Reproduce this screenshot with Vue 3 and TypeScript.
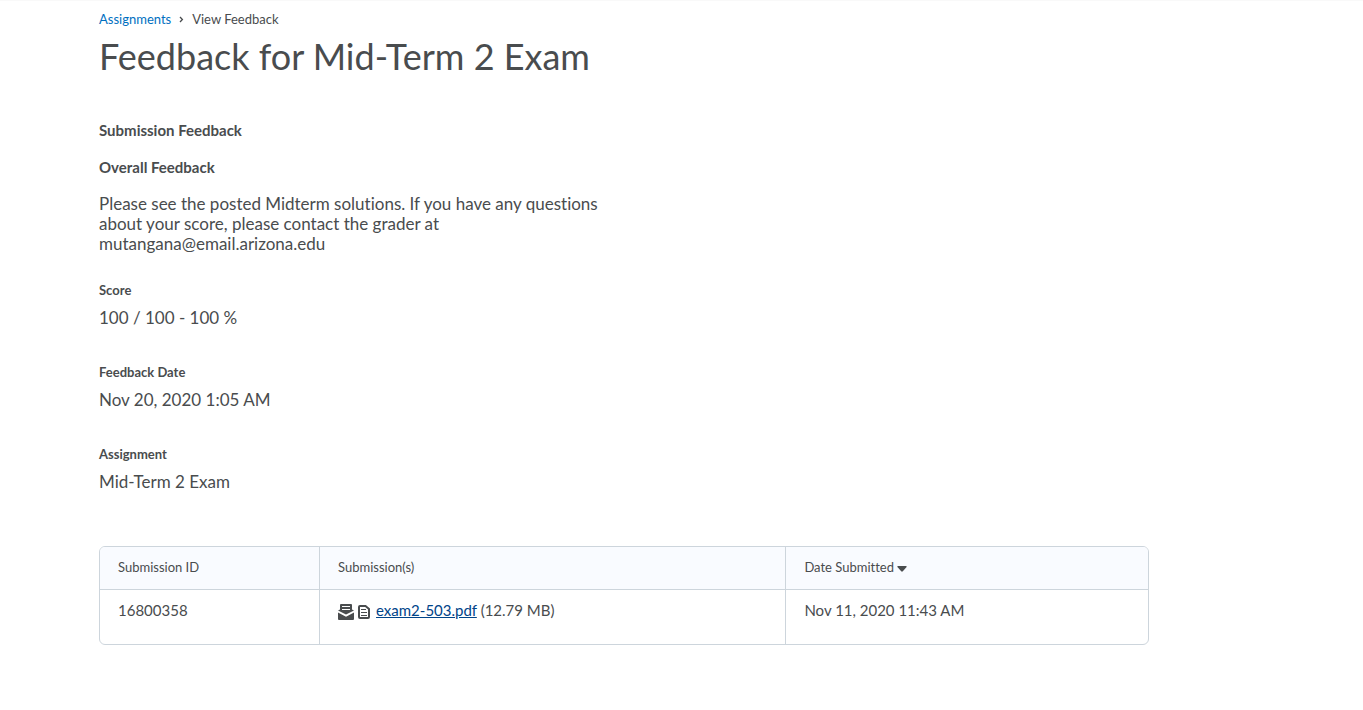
<script setup lang="ts">
interface Detail {
  label: string
  value: string
}

interface Submission {
  id: string
  file: string
  size: string
  date: string
}

const details: Detail[] = [
  { label: 'Score', value: '100 / 100 - 100 %' },
  { label: 'Feedback Date', value: 'Nov 20, 2020 1:05 AM' },
  { label: 'Assignment', value: 'Mid-Term 2 Exam' },
]

const submissions: Submission[] = [
  { id: '16800358', file: 'exam2-503.pdf', size: '(12.79 MB)', date: 'Nov 11, 2020 11:43 AM' },
]
</script>

<template>
  <main class="page">
    <nav class="crumbs" aria-label="Breadcrumb">
      <a href="#">Assignments</a>
      <svg class="chevron" viewBox="0 0 5 8" aria-hidden="true"><path d="M1 2 3.4 4.5 1 7" /></svg>
      <span>View Feedback</span>
    </nav>
    <h1>Feedback for Mid-Term 2 Exam</h1>

    <h2>Submission Feedback</h2>
    <h2>Overall Feedback</h2>
    <p class="feedback">
      Please see the posted Midterm solutions. If you have any questions about your score, please contact the grader at
      mutangana@email.arizona.edu
    </p>

    <dl>
      <div v-for="item in details" :key="item.label" class="detail">
        <dt>{{ item.label }}</dt>
        <dd>{{ item.value }}</dd>
      </div>
    </dl>

    <table>
      <thead>
        <tr>
          <th class="col-id" scope="col">Submission ID</th>
          <th class="col-file" scope="col">Submission(s)</th>
          <th scope="col" aria-sort="descending">
            <button type="button" class="sort">
              Date Submitted
              <svg class="caret" viewBox="0 0 10 10" aria-hidden="true"><path d="M1 4h8q1 0 .6.9L5.8 9.3Q5 10 4.2 9.3L.4 4.9Q0 4 1 4Z" /></svg>
            </button>
          </th>
        </tr>
      </thead>
      <tbody>
        <tr v-for="row in submissions" :key="row.id">
          <td>{{ row.id }}</td>
          <td>
            <div class="file">
              <div class="icons">
                <svg class="inbox" viewBox="0 0 16 16" aria-hidden="true">
                  <path d="M3 0h10q1 0 1 1v4.5l2 1L8 10.6 0 6.500l2-1V1q0-1 1-1Z" />
                  <path class="cut" d="M4 2.500h8M4 5.500h8" />
                  <path d="M0 8.500l8 4.200 8-4.200V15q0 1-1 1H1q-1 0-1-1Z" />
                </svg>
                <svg class="doc" viewBox="0 0 12 16" aria-hidden="true">
                  <path class="outline" d="M2 2h5.500L11 5v8q0 1-1 1H2q-1 0-1-1V3q0-1 1-1Z" />
                  <path class="lines" d="M3 5.500h5M3 8.500h6M3 11.500h6" />
                </svg>
              </div>
              <div>
                <a href="#">{{ row.file }}</a>
                {{ row.size }}
              </div>
            </div>
          </td>
          <td>{{ row.date }}</td>
        </tr>
      </tbody>
    </table>
  </main>
</template>

<style>
body {
  margin: 0;
  background: #fff;
}
</style>

<style scoped>
.page {
  box-sizing: border-box;
  border-top: 1px solid #f9f9f9;
  padding: 8px 99px 64px;
  color: #494c4e;
  font-family: Lato, "Liberation Sans", sans-serif;
  font-size: 15px;
  font-variant-ligatures: none;
}
.crumbs {
  display: flex;
  align-items: center;
  gap: 8px;
  font-size: 13px;
  line-height: 20px;
}
.crumbs a {
  color: #006fbf;
  text-decoration: none;
}
.chevron {
  width: 5px;
  height: 8px;
  fill: none;
  stroke: #494c4e;
  stroke-width: 1.3;
}
h1 {
  margin: 3px 0 40px;
  font-size: 36px;
  font-weight: 400;
  line-height: 48px;
}
h2 {
  margin: 0;
  font-size: 15px;
  font-weight: 700;
  line-height: 20px;
}
h2 + h2 {
  margin-top: 17px;
}
.feedback {
  max-width: 525px;
  margin: 17px 0 27px;
  font-size: 17px;
  line-height: 20px;
}
dl {
  margin: 0;
}
.detail {
  margin-bottom: 33px;
}
dt {
  font-size: 13px;
  font-weight: 700;
  line-height: 18px;
}
dd {
  margin: 7px 0 0;
  font-size: 17px;
  line-height: 24px;
}
table {
  width: 100%;
  max-width: 1050px;
  margin-top: 52px;
  border: 1px solid #cdd5dc;
  border-radius: 6px;
  border-spacing: 0;
  table-layout: fixed;
  overflow: hidden;
}
.col-id {
  width: 20.9%;
}
.col-file {
  width: 44.5%;
}
th,
td {
  box-sizing: border-box;
  padding: 0 18px;
  text-align: left;
}
th + th,
td + td {
  border-left: 1px solid #cdd5dc;
}
th {
  height: 43px;
  padding-bottom: 2px;
  border-bottom: 1px solid #cdd5dc;
  background: #f9fbff;
  font-size: 13px;
  font-weight: 400;
}
td {
  height: 54px;
  padding-top: 10px;
  line-height: 20px;
  vertical-align: top;
}
.sort {
  display: flex;
  align-items: center;
  gap: 3px;
  border: 0;
  padding: 0;
  background: none;
  color: inherit;
  font: inherit;
}
.caret {
  width: 10px;
  height: 10px;
  fill: #494c4e;
}
.file {
  display: flex;
  align-items: flex-end;
  gap: 6px;
}
.icons {
  display: flex;
  flex: none;
  gap: 4px;
}
.file a {
  color: #004489;
}
.inbox,
.doc {
  fill: #494c4e;
}
.inbox {
  width: 16px;
  height: 16px;
}
.cut {
  stroke: #fff;
}
.doc {
  width: 12px;
  height: 16px;
}
.outline {
  fill: none;
  stroke: #494c4e;
  stroke-width: 2;
}
.lines {
  stroke: #494c4e;
}
</style>
